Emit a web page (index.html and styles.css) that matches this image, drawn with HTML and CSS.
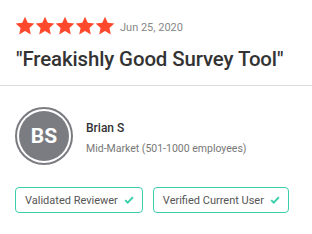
FILE: index.html
```html
<!DOCTYPE html>
<html>
<head>
<meta charset="utf-8">
<link rel="stylesheet" href="styles.css">
</head>
<body>
<div class="card">
  <div class="head">
    <div class="rating">
      <div class="stars">
        <svg class="star" viewBox="0 0 24 24"><path d="M12 0.8l3.3 7.3 7.9.8-5.9 5.4 1.7 7.9L12 18.1l-7 4.1 1.7-7.9-5.9-5.4 7.9-.8z"/></svg>
        <svg class="star" viewBox="0 0 24 24"><path d="M12 0.8l3.3 7.3 7.9.8-5.9 5.4 1.7 7.9L12 18.1l-7 4.1 1.7-7.9-5.9-5.4 7.9-.8z"/></svg>
        <svg class="star" viewBox="0 0 24 24"><path d="M12 0.8l3.3 7.3 7.9.8-5.9 5.4 1.7 7.9L12 18.1l-7 4.1 1.7-7.9-5.9-5.4 7.9-.8z"/></svg>
        <svg class="star" viewBox="0 0 24 24"><path d="M12 0.8l3.3 7.3 7.9.8-5.9 5.4 1.7 7.9L12 18.1l-7 4.1 1.7-7.9-5.9-5.4 7.9-.8z"/></svg>
        <svg class="star" viewBox="0 0 24 24"><path d="M12 0.8l3.3 7.3 7.9.8-5.9 5.4 1.7 7.9L12 18.1l-7 4.1 1.7-7.9-5.9-5.4 7.9-.8z"/></svg>
      </div>
      <span class="date">Jun 25, 2020</span>
    </div>
    <h1 class="title">"Freakishly Good Survey Tool"</h1>
  </div>
  <div class="reviewer">
    <div class="avatar"><div class="avatar-inner">BS</div></div>
    <div class="info">
      <div class="name">Brian S</div>
      <div class="segment">Mid-Market (501-1000 employees)</div>
    </div>
  </div>
  <div class="badges">
    <div class="badge">Validated Reviewer <svg class="check" viewBox="0 0 12 10"><path d="M1.2 5.2l3.2 3 6.4-6.6"/></svg></div>
    <div class="badge">Verified Current User <svg class="check" viewBox="0 0 12 10"><path d="M1.2 5.2l3.2 3 6.4-6.6"/></svg></div>
  </div>
</div>
</body>
</html>
```
FILE: styles.css
```css
* { box-sizing: border-box; }
html, body { margin: 0; padding: 0; background: #fff; }
body { font-family: Roboto, "Liberation Sans", sans-serif; color: #333; }
.card { width: 312px; height: 234px; background: #fff; }
.head { padding: 15px 15px 0 15px; height: 86px; border-bottom: 1px solid #dcdcdc; }
.rating { display: flex; align-items: center; height: 21px; }
.stars { display: flex; gap: 0; }
.star { width: 20px; height: 20px; fill: #ff492c; }
.date { margin-left: 5px; font-size: 11px; color: #888; margin-top: 3px; }
.title { margin: 11px 0 0 1px; font-size: 20.4px; font-weight: 500; color: #333; letter-spacing: -0.1px; line-height: 24px; }
.reviewer { display: flex; align-items: center; padding: 21px 0 0 15px; }
.avatar { width: 58px; height: 58px; border-radius: 50%; border: 2px solid #7b7b82; padding: 2px; }
.avatar-inner { width: 100%; height: 100%; border-radius: 50%; background: #7b7b82; color: #fff; font-weight: 700; font-size: 21px; display: flex; align-items: center; justify-content: center; }
.info { margin-left: 13px; margin-top: 3px; }
.name { font-size: 12px; font-weight: 500; color: #333; }
.segment { font-size: 10.5px; color: #777; margin-top: 7px; }
.badges { display: flex; gap: 10px; padding: 22px 0 0 15px; }
.badge { display: flex; align-items: center; height: 26px; padding: 0 8px 0 9px; border: 1.5px solid #3ccfae; border-radius: 4px; font-size: 11px; color: #555; }
.check { width: 10px; height: 8px; margin-left: 6px; fill: none; stroke: #3ccfae; stroke-width: 2.4; }
```
